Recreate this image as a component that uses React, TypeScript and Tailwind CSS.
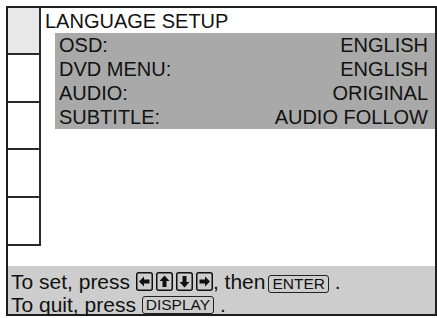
import React from "react";

const rows = [
  { label: "OSD:", value: "ENGLISH" },
  { label: "DVD MENU:", value: "ENGLISH" },
  { label: "AUDIO:", value: "ORIGINAL" },
  { label: "SUBTITLE:", value: "AUDIO FOLLOW" },
];

function Key({ dir }: { dir: "left" | "up" | "down" | "right" }) {
  const shapes = {
    left: "3,9.5 8,4.5 8,7.5 13.5,7.5 13.5,11.5 8,11.5 8,14.5",
    right: "14,9.5 9,4.5 9,7.5 3.5,7.5 3.5,11.5 9,11.5 9,14.5",
    up: "8.5,3.5 13.5,9 10.5,9 10.5,15 6.5,15 6.5,9 3.5,9",
    down: "8.5,15.5 13.5,10 10.5,10 10.5,4 6.5,4 6.5,10 3.5,10",
  };
  return (
    <svg width="17" height="19" viewBox="0 0 17 19" className="shrink-0">
      <rect x="0.75" y="0.75" width="15.5" height="17.5" rx="2" fill="none" stroke="#111" strokeWidth="1.5" />
      <polygon points={shapes[dir]} fill="#111" />
    </svg>
  );
}

function Btn({ children }: { children: React.ReactNode }) {
  return (
    <span className="inline-flex items-center h-[18px] px-[3px] border-[1.5px] border-[#222] rounded-[3px] text-[15.5px] leading-none">
      {children}
    </span>
  );
}

export default function App() {
  return (
    <div
      className="w-[437px] h-[318px] bg-white text-[#111] overflow-hidden"
      style={{ fontFamily: '"Liberation Sans", Arial, sans-serif' }}
    >
      <div className="ml-[6px] mt-[6px] w-[431px] h-[310px] border-2 border-[#1e1e1e] flex flex-col">
        <div className="flex flex-1">
          <div className="w-[33px] flex flex-col">
            <div className="h-[47px] bg-[#e8e8e8] border-r-2 border-b-2 border-[#2a2a2a]" />
            <div className="h-[48px] border-r-2 border-b-2 border-[#2a2a2a]" />
            <div className="h-[47px] border-r-2 border-b-2 border-[#2a2a2a]" />
            <div className="h-[48px] border-r-2 border-b-2 border-[#2a2a2a]" />
            <div className="h-[48px] border-r-2 border-b-2 border-[#2a2a2a]" />
          </div>
          <div className="flex-1 flex flex-col text-[20px] leading-[24px]">
            <div className="mt-[1px] pl-[4px]">LANGUAGE SETUP</div>
            <div className="ml-[14px] bg-[#a9a9a9] pl-[4px] pr-[7px]">
              {rows.map((r) => (
                <div key={r.label} className="flex justify-between">
                  <span>{r.label}</span>
                  <span>{r.value}</span>
                </div>
              ))}
            </div>
          </div>
        </div>
        <div className="h-[48px] bg-[#cdcdcd] pt-[4px] pl-[3px] text-[21px] leading-[23px]">
          <div className="flex items-center whitespace-pre">
            <span>To set, press </span>
            <span className="flex gap-[3px]">
              <Key dir="left" />
              <Key dir="up" />
              <Key dir="down" />
              <Key dir="right" />
            </span>
            <span>, then</span>
            <span className="ml-[3px]">
              <Btn>ENTER</Btn>
            </span>
            <span> .</span>
          </div>
          <div className="flex items-center whitespace-pre">
            <span>To quit, press </span>
            <Btn>DISPLAY</Btn>
            <span> .</span>
          </div>
        </div>
      </div>
    </div>
  );
}
